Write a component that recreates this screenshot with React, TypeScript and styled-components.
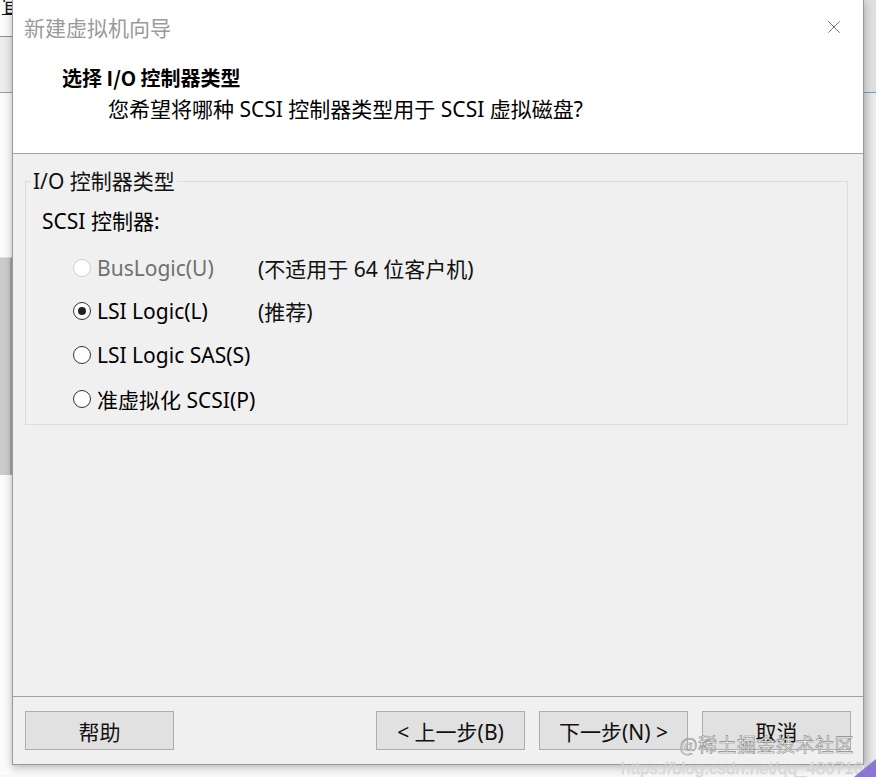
import styled, { createGlobalStyle } from 'styled-components'
import { X } from 'lucide-react'

const GlobalStyle = createGlobalStyle`
  html, body {
    margin: 0;
    padding: 0;
    background: #f4f4f4;
  }
  body {
    font-family: "Noto Sans", "Noto Sans CJK SC", sans-serif;
    color: #000;
  }
  * {
    box-sizing: border-box;
  }
`

const Desktop = styled.div`
  position: relative;
  width: 876px;
  height: 777px;
  overflow: hidden;
  display: grid;
  grid-template-columns: 12px 852px 12px;
  background: #f7f7f7;
`

const LeftStrip = styled.div`
  display: flex;
  flex-direction: column;
  overflow: hidden;
`

const StripBlock = styled.div<{ h: number; bg: string; edge?: string }>`
  height: ${p => p.h}px;
  flex: none;
  background: ${p => p.bg};
  border-bottom: ${p => (p.edge ? `1px solid ${p.edge}` : 'none')};
  overflow: hidden;
`

const ClippedChar = styled.span`
  display: block;
  margin: -6px 0 0 2px;
  font-family: "Noto Sans CJK SC", sans-serif;
  font-size: 19px;
  line-height: 22px;
  color: #111;
  text-decoration: underline;
`

const GrayPane = styled.div`
  height: 218px;
  flex: none;
  background: #cbcbcb;
  border-right: 2px solid #a5a5a5;
  border-top: 1px solid #e0e0e0;
`

const RightStrip = styled.div`
  display: flex;
  flex-direction: column;
  background: linear-gradient(to right, #d6d6d6, #ededed);
`

const Dialog = styled.div`
  height: 765px;
  display: flex;
  flex-direction: column;
  background: #f0f0f0;
  border: 1px solid #9a9a9a;
  border-top: none;
  box-shadow: 0 2px 8px rgba(0, 0, 0, 0.28);
  z-index: 1;
`

const TitleBar = styled.div`
  height: 54px;
  flex: none;
  display: flex;
  align-items: center;
  justify-content: space-between;
  padding: 0 18px 0 11px;
  background: #fff;
`

const TitleText = styled.span`
  font-family: "Noto Sans CJK SC", sans-serif;
  font-size: 21px;
  color: #9a9a9a;
`

const CloseButton = styled.div`
  display: flex;
  color: #6a6a6a;
`

const Header = styled.div`
  flex: none;
  display: flex;
  flex-direction: column;
  padding: 10px 0 30px 49px;
  background: #fff;
  border-bottom: 1px solid #a0a0a0;
`

const Heading = styled.div`
  font-family: "Noto Sans CJK SC", sans-serif;
  font-size: 20px;
  font-weight: 700;
  line-height: 28px;
`

const SubTitle = styled.div`
  margin: 3px 0 0 46px;
  font-size: 21px;
  line-height: 28px;
`

const Body = styled.div`
  flex: 1;
  padding: 14px 15px 0 12px;
  border-bottom: 1px solid #a0a0a0;
`

const GroupBox = styled.fieldset`
  margin: 0;
  padding: 13px 16px 4px 16px;
  border: 1px solid #dcdcdc;
  border-radius: 0;
`

const GroupLegend = styled.legend`
  padding: 0 2px;
  margin-left: -11px;
  font-size: 21px;
  line-height: 26px;
  color: #111;
`

const GroupLabel = styled.div`
  font-size: 21px;
  line-height: 28px;
`

const OptionList = styled.div`
  margin: 11px 0 0 31px;
  display: flex;
  flex-direction: column;
`

const OptionRow = styled.div`
  height: 43.6px;
  display: grid;
  grid-template-columns: 185px auto;
  align-items: center;
`

const OptionLabel = styled.div<{ disabled?: boolean }>`
  display: flex;
  align-items: center;
  gap: 6px;
  font-size: 21px;
  color: ${p => (p.disabled ? '#707070' : '#000')};
`

const Radio = styled.span<{ checked?: boolean; disabled?: boolean }>`
  width: 18px;
  height: 18px;
  flex: none;
  border-radius: 50%;
  border: 1px solid ${p => (p.disabled ? '#cfcfcf' : '#333')};
  background: #fff;
  display: flex;
  align-items: center;
  justify-content: center;

  &::after {
    content: '';
    width: 8px;
    height: 8px;
    border-radius: 50%;
    background: #222;
    display: ${p => (p.checked ? 'block' : 'none')};
  }
`

const OptionNote = styled.span`
  font-size: 21px;
  color: #111;
`

const Footer = styled.div`
  flex: none;
  display: flex;
  justify-content: space-between;
  padding: 14px 12px;
`

const ButtonGroup = styled.div`
  display: flex;
  gap: 14px;
`

const Button = styled.button`
  width: 149px;
  height: 39px;
  padding: 0;
  background: #e1e1e1;
  border: 1px solid #adadad;
  font-family: "Noto Sans", "Noto Sans CJK SC", sans-serif;
  font-size: 21px;
  color: #111;
`

const Watermark = styled.div`
  position: absolute;
  right: 22px;
  bottom: 20px;
  font-family: "Noto Sans CJK SC", sans-serif;
  font-size: 19px;
  color: rgba(255, 255, 255, 0.85);
  -webkit-text-stroke: 0.6px #8a8a8a;
  letter-spacing: 0.5px;
  z-index: 2;
`

const WatermarkUrl = styled.div`
  position: absolute;
  right: -6px;
  bottom: -2px;
  font-family: "Liberation Sans", sans-serif;
  font-size: 17px;
  color: rgba(220, 220, 220, 0.9);
  -webkit-text-stroke: 0.3px #c8c8c8;
  z-index: 2;
`

const CornerMark = styled.div`
  position: absolute;
  right: 0;
  bottom: 0;
  width: 0;
  height: 0;
  border-left: 22px solid transparent;
  border-bottom: 18px solid #8d75d6;
  z-index: 2;
`

const options = [
  { label: 'BusLogic(U)', note: '(不适用于 64 位客户机)', disabled: true },
  { label: 'LSI Logic(L)', note: '(推荐)', checked: true },
  { label: 'LSI Logic SAS(S)' },
  { label: '准虚拟化 SCSI(P)' }
]

function App() {
  return (
    <>
      <GlobalStyle />
      <Desktop>
        <LeftStrip>
          <StripBlock h={37} bg="#fbfbfb" edge="#8c8c8c">
            <ClippedChar>官</ClippedChar>
          </StripBlock>
          <StripBlock h={56} bg="#ededed" edge="#9a9a9a" />
          <StripBlock h={164} bg="#fbfbfb" />
          <GrayPane />
          <StripBlock h={300} bg="#fbfbfb" />
        </LeftStrip>

        <Dialog>
          <TitleBar>
            <TitleText>新建虚拟机向导</TitleText>
            <CloseButton>
              <X size={22} strokeWidth={1} />
            </CloseButton>
          </TitleBar>

          <Header>
            <Heading>选择 I/O 控制器类型</Heading>
            <SubTitle>您希望将哪种 SCSI 控制器类型用于 SCSI 虚拟磁盘?</SubTitle>
          </Header>

          <Body>
            <GroupBox>
              <GroupLegend>I/O 控制器类型</GroupLegend>
              <GroupLabel>SCSI 控制器:</GroupLabel>
              <OptionList>
                {options.map(o => (
                  <OptionRow key={o.label}>
                    <OptionLabel disabled={o.disabled}>
                      <Radio checked={o.checked} disabled={o.disabled} />
                      {o.label}
                    </OptionLabel>
                    {o.note && <OptionNote>{o.note}</OptionNote>}
                  </OptionRow>
                ))}
              </OptionList>
            </GroupBox>
          </Body>

          <Footer>
            <Button>帮助</Button>
            <ButtonGroup>
              <Button>&lt; 上一步(B)</Button>
              <Button>下一步(N) &gt;</Button>
              <Button>取消</Button>
            </ButtonGroup>
          </Footer>
        </Dialog>

        <RightStrip>
          <StripBlock h={93} bg="#dedede" edge="#6f9fc4" />
        </RightStrip>

        <Watermark>@稀土掘金技术社区</Watermark>
        <WatermarkUrl>https://blog.csdn.net/qq_48071680</WatermarkUrl>
        <CornerMark />
      </Desktop>
    </>
  )
}

export default App
